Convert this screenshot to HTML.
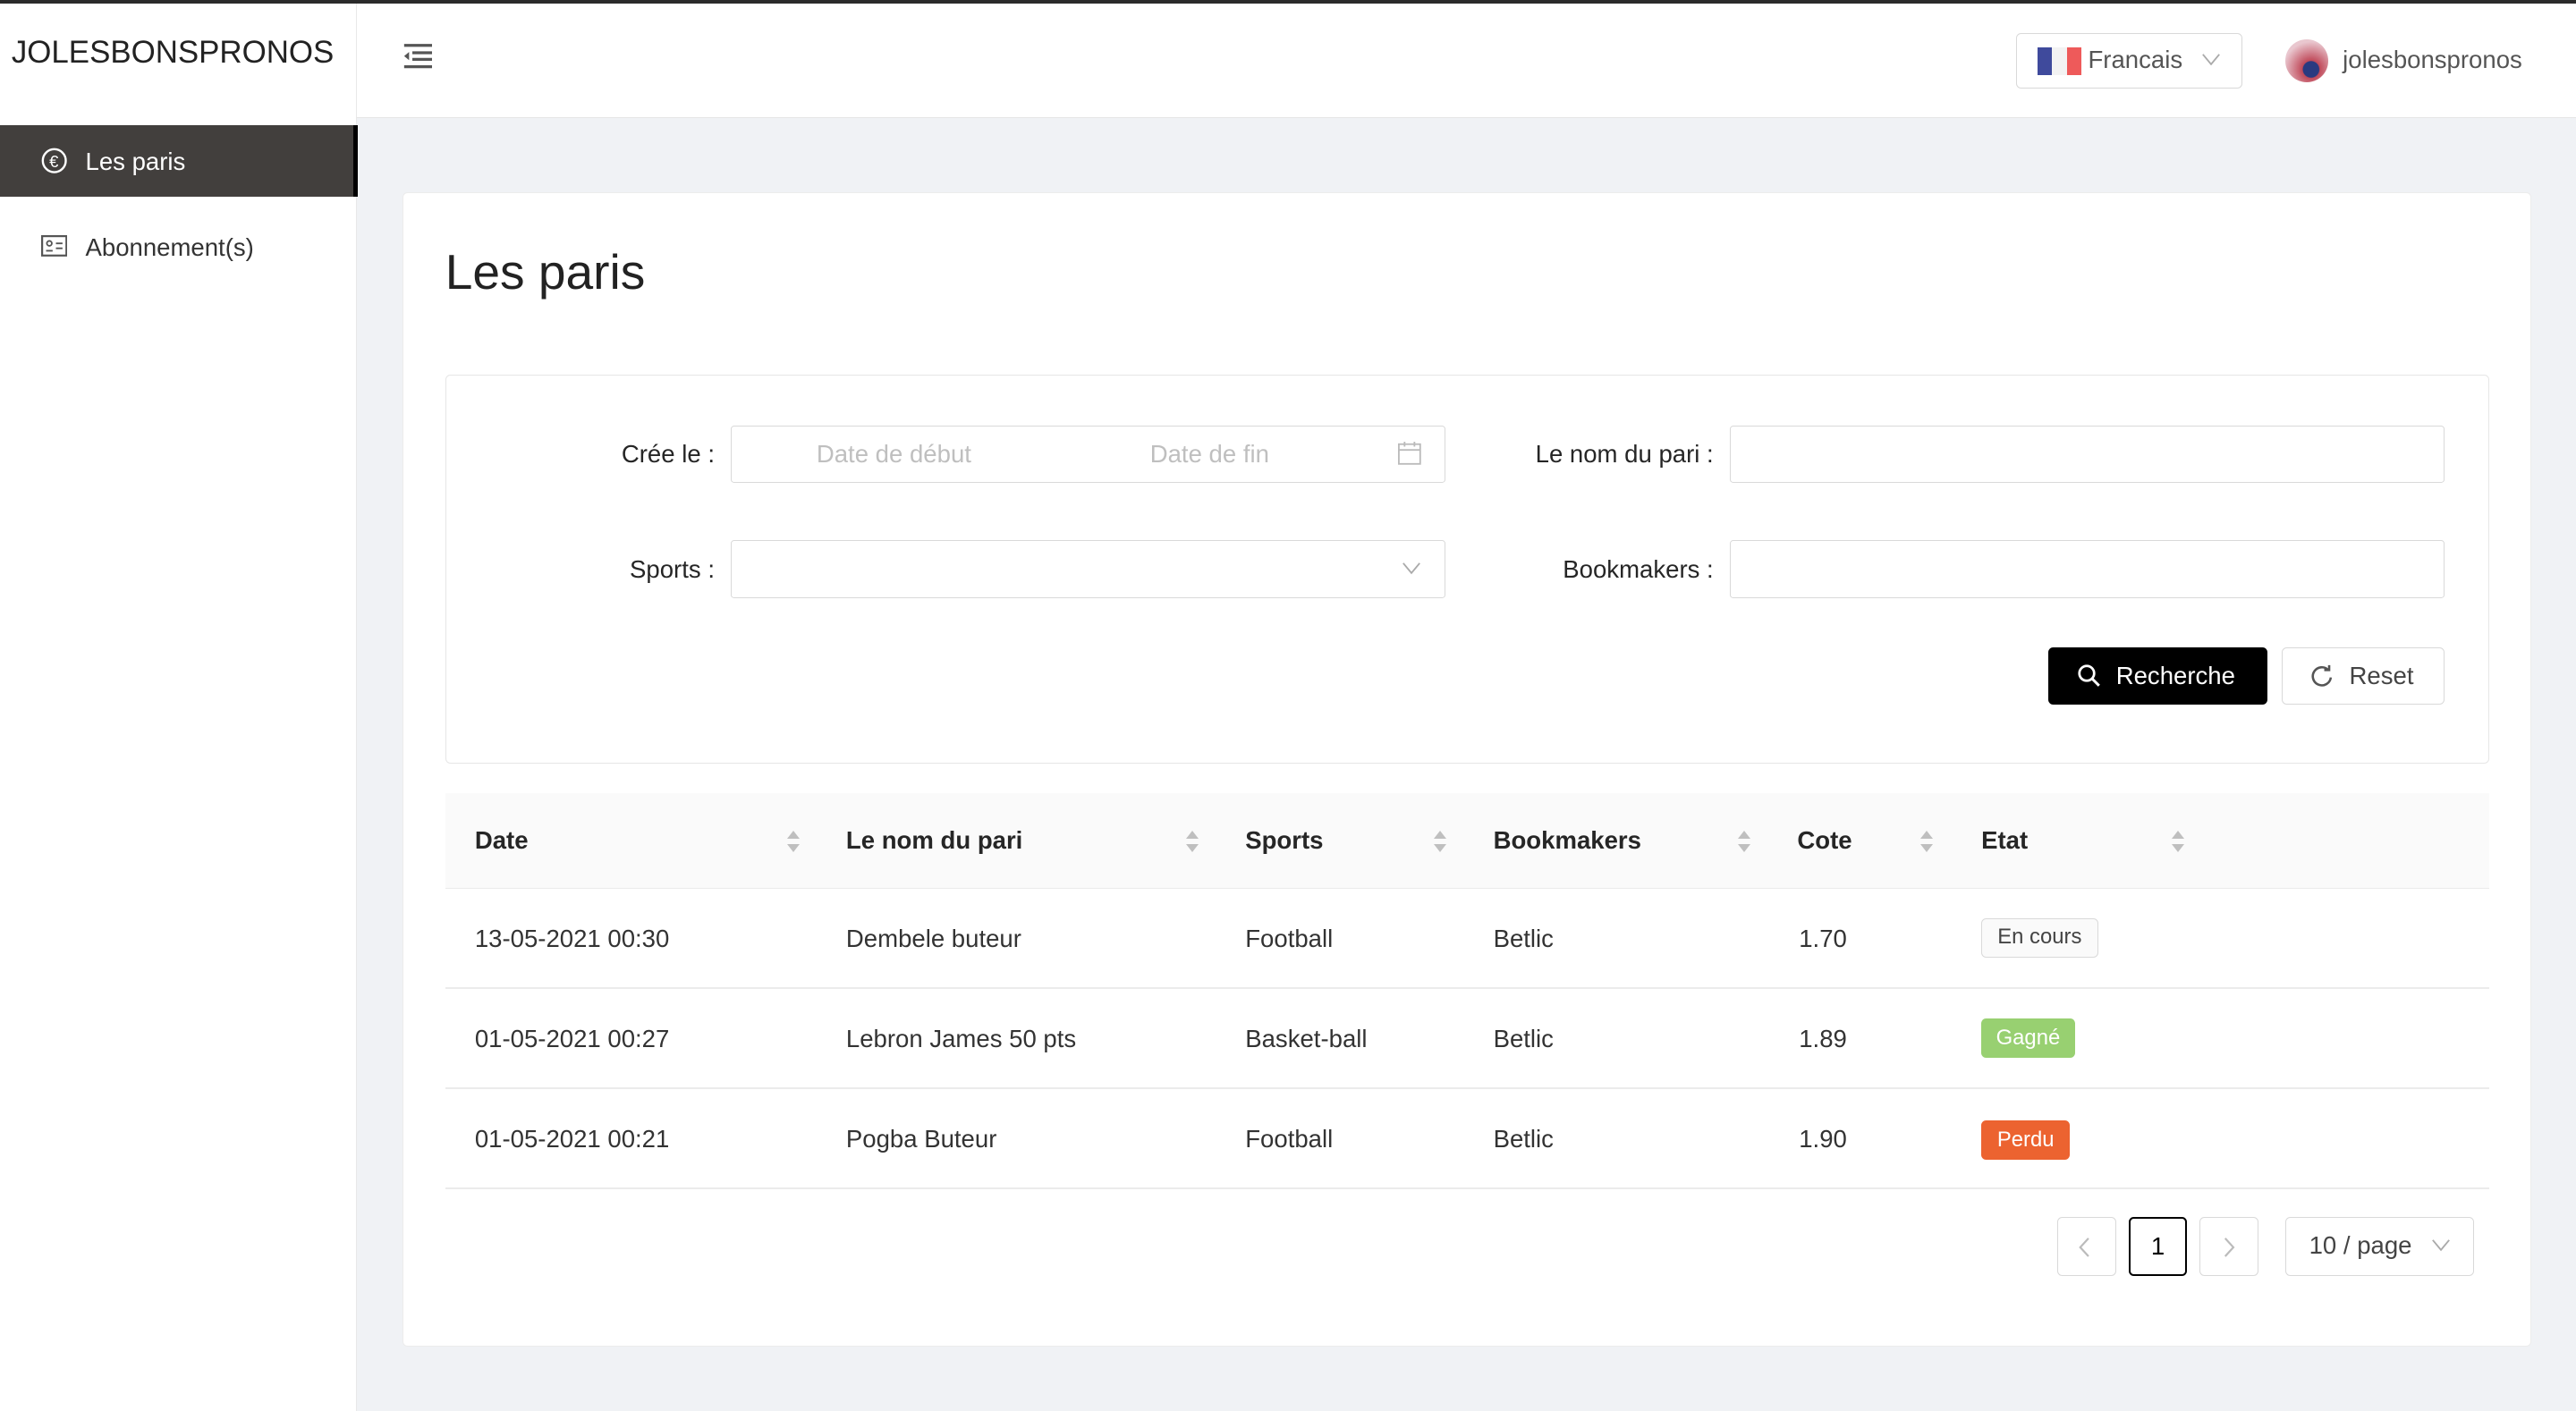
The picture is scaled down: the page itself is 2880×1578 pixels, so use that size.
<!DOCTYPE html>
<html><head><meta charset="utf-8"><style>
*{box-sizing:border-box;margin:0;padding:0}
html,body{width:2880px;height:1578px;overflow:hidden;background:#f0f2f5}
#z{zoom:1.83673;width:1568px;height:860px;position:relative;font-family:"Liberation Sans",sans-serif;color:#262626;background:#f0f2f5}
.a{position:absolute}
.top{left:0;top:0;width:1568px;height:2px;background:#2b2b2b}
.side{left:0;top:2px;width:217px;height:858px;background:#fff;border-right:1px solid #e8e8e8}
.hdr{left:217px;top:2px;width:1351px;height:70px;background:#fff;border-bottom:1px solid #e6e6e6}
.inp{border:1px solid #d9d9d9;border-radius:2px;background:#fff;height:35px}
.lbl{font-size:15px;text-align:right;width:160px}
.th{font-size:15px;font-weight:bold;top:503px}
.td{font-size:15px;color:#333}
.sort{width:8px}
.sort:before,.sort:after{content:"";position:absolute;left:0;border-left:4px solid transparent;border-right:4px solid transparent}
.sort:before{top:0;border-bottom:5px solid #bfbfbf}
.sort:after{top:8px;border-top:5px solid #bfbfbf}
.line{left:271px;width:1244px;height:1px;background:#ebebeb}
.pg{border:1px solid #d9d9d9;border-radius:3px;background:#fff;height:36px;text-align:center;line-height:34px;color:#bbb;font-size:15px}
</style></head><body><div id="z">
<div class="a top"></div>
<div class="a side"></div>
<div class="a" style="left:7px;top:21px;font-size:19px;letter-spacing:0px;color:#222">JOLESBONSPRONOS</div>
<div class="a" style="left:0;top:76px;width:218px;height:44px;background:#423f3d;border-right:3px solid #000"></div>
<svg class="a" style="left:25px;top:90px" width="16" height="16" viewBox="0 0 16 16"><circle cx="8" cy="8" r="7" fill="none" stroke="#fff" stroke-width="1.3"/><text x="5" y="12" font-size="10" fill="#fff" font-family="Liberation Sans">€</text></svg>
<div class="a" style="left:52px;top:90px;font-size:15px;color:#fff">Les paris</div>
<svg class="a" style="left:25px;top:143px" width="16" height="13" viewBox="0 0 16 13"><rect x="0.6" y="0.6" width="14.8" height="11.8" fill="none" stroke="#555" stroke-width="1.2"/><circle cx="5" cy="5" r="1.5" fill="none" stroke="#555"/><path d="M3 9.5h4M9 5h4M9 8h4" stroke="#555"/></svg>
<div class="a" style="left:52px;top:142px;font-size:15px;color:#333">Abonnement(s)</div>
<div class="a hdr"></div>
<svg class="a" style="left:245px;top:26px" width="18" height="16" viewBox="0 0 18 16"><path d="M1 1.5h17M6 6h12M6 10h12M1 14.5h17" stroke="#555" stroke-width="1.8"/><path d="M4 5.5v5L1 8z" fill="#555"/></svg>
<div class="a inp" style="left:1227px;top:20px;width:138px;height:34px;border-radius:3px"></div>
<div class="a" style="left:1240px;top:29px;width:9px;height:17px;background:#3f4a9c"></div>
<div class="a" style="left:1249px;top:29px;width:9px;height:17px;background:#f3f3f3"></div>
<div class="a" style="left:1258px;top:29px;width:9px;height:17px;background:#ee5a5a"></div>
<div class="a" style="left:1271px;top:28px;font-size:15px;color:#555">Francais</div>
<svg class="a" style="left:1340px;top:32px" width="12" height="8"><path d="M1 1l5 6 5-6" fill="none" stroke="#aaa"/></svg>
<div class="a" style="left:1391px;top:24px;width:26px;height:26px;border-radius:50%;background:radial-gradient(circle at 60% 70%,#2a3a80 0 20%,#c04a5a 22%,#e9c7cf 70%)"></div>
<div class="a" style="left:1426px;top:28px;font-size:15px;color:#555">jolesbonspronos</div>

<div class="a" style="left:245px;top:117px;width:1296px;height:703px;background:#fff;border:1px solid #ececec;border-radius:3px"></div>
<div class="a" style="left:271px;top:148px;font-size:30px;color:#222">Les paris</div>
<div class="a" style="left:271px;top:228px;width:1244px;height:237px;border:1px solid #e6e6e6;border-radius:3px"></div>
<div class="a lbl" style="left:275px;top:268px">Crée le :</div>
<div class="a inp" style="left:445px;top:259px;width:435px"></div>
<div class="a" style="left:497px;top:268px;font-size:15px;color:#bfbfbf">Date de début</div>
<div class="a" style="left:700px;top:268px;font-size:15px;color:#bfbfbf">Date de fin</div>
<svg class="a" style="left:851px;top:269px" width="14" height="14"><rect x="0.5" y="1.5" width="13" height="12" fill="none" stroke="#bbb"/><path d="M0.5 5h13M4 0v3M10 0v3" stroke="#bbb"/></svg>
<div class="a lbl" style="left:883px;top:268px">Le nom du pari :</div>
<div class="a inp" style="left:1053px;top:259px;width:435px"></div>
<div class="a lbl" style="left:275px;top:338px">Sports :</div>
<div class="a inp" style="left:445px;top:329px;width:435px"></div>
<svg class="a" style="left:853px;top:342px" width="12" height="8"><path d="M1 1l5 6 5-6" fill="none" stroke="#aaa"/></svg>
<div class="a lbl" style="left:883px;top:338px">Bookmakers :</div>
<div class="a inp" style="left:1053px;top:329px;width:435px"></div>
<div class="a" style="left:1247px;top:394px;width:133px;height:35px;background:#000;border-radius:3px"></div>
<svg class="a" style="left:1264px;top:404px" width="15" height="15"><circle cx="6" cy="6" r="4.5" fill="none" stroke="#fff" stroke-width="1.5"/><path d="M9.5 9.5l4 4" stroke="#fff" stroke-width="1.6"/></svg>
<div class="a" style="left:1288px;top:403px;font-size:15px;color:#fff">Recherche</div>
<div class="a inp" style="left:1389px;top:394px;width:99px;border-radius:3px"></div>
<svg class="a" style="left:1406px;top:404px" width="15" height="15"><path d="M11.5 4A5.5 5.5 0 1 0 13 8.5" fill="none" stroke="#555" stroke-width="1.4"/><path d="M9 4h3V1" fill="none" stroke="#555" stroke-width="1.4"/></svg>
<div class="a" style="left:1430px;top:403px;font-size:15px;color:#444">Reset</div>

<div class="a" style="left:271px;top:483px;width:1244px;height:58px;background:#fafafa;border-bottom:1px solid #ebebeb"></div>
<div class="a th" style="left:289px">Date</div><div class="a sort" style="left:479px;top:506px"></div>
<div class="a th" style="left:515px">Le nom du pari</div><div class="a sort" style="left:722px;top:506px"></div>
<div class="a th" style="left:758px">Sports</div><div class="a sort" style="left:873px;top:506px"></div>
<div class="a th" style="left:909px">Bookmakers</div><div class="a sort" style="left:1058px;top:506px"></div>
<div class="a th" style="left:1094px">Cote</div><div class="a sort" style="left:1169px;top:506px"></div>
<div class="a th" style="left:1206px">Etat</div><div class="a sort" style="left:1322px;top:506px"></div>

<div class="a td" style="left:289px;top:563px">13-05-2021 00:30</div>
<div class="a td" style="left:515px;top:563px">Dembele buteur</div>
<div class="a td" style="left:758px;top:563px">Football</div>
<div class="a td" style="left:909px;top:563px">Betlic</div>
<div class="a td" style="left:1095px;top:563px">1.70</div>
<div class="a" style="left:1206px;top:559px;width:71px;height:24px;border:1px solid #d9d9d9;background:#fafafa;border-radius:3px;font-size:13px;color:#444;text-align:center;line-height:22px">En cours</div>
<div class="a line" style="top:601px"></div>
<div class="a td" style="left:289px;top:624px">01-05-2021 00:27</div>
<div class="a td" style="left:515px;top:624px">Lebron James 50 pts</div>
<div class="a td" style="left:758px;top:624px">Basket-ball</div>
<div class="a td" style="left:909px;top:624px">Betlic</div>
<div class="a td" style="left:1095px;top:624px">1.89</div>
<div class="a" style="left:1206px;top:620px;width:57px;height:24px;background:#98d071;border-radius:3px;font-size:13px;color:#fff;text-align:center;line-height:24px">Gagné</div>
<div class="a line" style="top:662px"></div>
<div class="a td" style="left:289px;top:685px">01-05-2021 00:21</div>
<div class="a td" style="left:515px;top:685px">Pogba Buteur</div>
<div class="a td" style="left:758px;top:685px">Football</div>
<div class="a td" style="left:909px;top:685px">Betlic</div>
<div class="a td" style="left:1095px;top:685px">1.90</div>
<div class="a" style="left:1206px;top:682px;width:54px;height:24px;background:#ec6330;border-radius:3px;font-size:13px;color:#fff;text-align:center;line-height:24px">Perdu</div>
<div class="a line" style="top:723px"></div>

<div class="a pg" style="left:1252px;top:741px;width:36px"></div>
<svg class="a" style="left:1265px;top:753px" width="8" height="13"><path d="M6.5 1l-5 5.5 5 5.5" fill="none" stroke="#bbb" stroke-width="1.2"/></svg>
<div class="a pg" style="left:1296px;top:741px;width:35px;border:1.5px solid #000;color:#000">1</div>
<div class="a pg" style="left:1339px;top:741px;width:36px"></div>
<svg class="a" style="left:1353px;top:753px" width="8" height="13"><path d="M1.5 1l5 5.5-5 5.5" fill="none" stroke="#bbb" stroke-width="1.2"/></svg>
<div class="a pg" style="left:1391px;top:741px;width:115px;color:#444;text-align:left;padding-left:14px">10 / page</div>
<svg class="a" style="left:1480px;top:754px" width="12" height="8"><path d="M1 1l5 6 5-6" fill="none" stroke="#aaa"/></svg>
</div></body></html>
